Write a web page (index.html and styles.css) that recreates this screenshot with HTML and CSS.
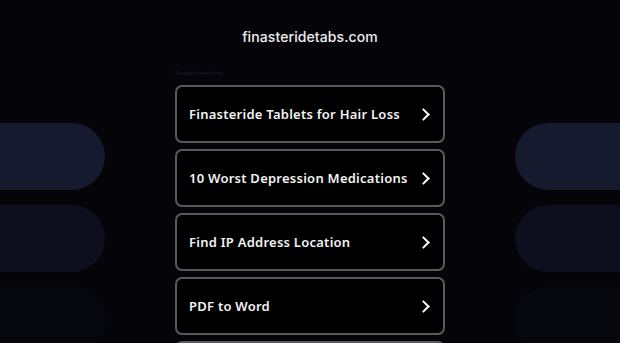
FILE: index.html
```html
<!DOCTYPE html>
<html>
	<head>
		<meta charset="utf-8" />
		<meta name="viewport" content="width=device-width, initial-scale=1.0" />
		<title>finasteridetabs.com</title>
		<link rel="stylesheet" href="styles.css">
	</head>
	<body class="main">
        <aside class="side side-left">
            <div class="pill pill-1"></div>
            <div class="pill pill-2"></div>
            <div class="pill pill-3"></div>
        </aside>
        <main class="content">
            <h1 class="domain">finasteridetabs.com</h1>
            <p class="related">Related searches</p>
            <ul class="links">
                <li><a class="link" href="#">Finasteride Tablets for Hair Loss<span class="chevron"></span></a></li>
                <li><a class="link" href="#">10 Worst Depression Medications<span class="chevron"></span></a></li>
                <li><a class="link" href="#">Find IP Address Location<span class="chevron"></span></a></li>
                <li><a class="link" href="#">PDF to Word<span class="chevron"></span></a></li>
                <li><a class="link" href="#" aria-hidden="true"></a></li>
            </ul>
        </main>
        <aside class="side side-right">
            <div class="pill pill-1"></div>
            <div class="pill pill-2"></div>
            <div class="pill pill-3"></div>
        </aside>
	</body>
</html>
```

FILE: styles.css
```css
:root {
    --font-family: "Noto Sans", "DejaVu Sans", Arial, sans-serif;
}

body {
    margin: 0;
    padding: 0;
    overflow: hidden;
    width: 100vw;
    height: 100vh;
    color: #fff;
    font-family: var(--font-family);
    background-color: #050509;
}

.main {
    display: grid;
    grid-template-columns: 105px 1fr 105px;
}

.side {
    display: flex;
    flex-direction: column;
    gap: 15px;
    padding-top: 123px;
}

.pill {
    height: 67px;
    flex-shrink: 0;
}

.side-left .pill {
    border-radius: 0 34px 34px 0;
}

.side-right .pill {
    border-radius: 34px 0 0 34px;
}

.pill-1 {
    background-color: #151a2e;
}

.pill-2 {
    background-color: #0d0f1f;
}

.pill-3 {
    background-color: #07070e;
}

.content {
    display: flex;
    flex-direction: column;
    align-items: center;
}

.domain {
    margin: 28px 0 0;
    font-family: "Inter", sans-serif;
    font-size: 14px;
    font-weight: 500;
    line-height: 18px;
    letter-spacing: 0.1px;
    color: #eeeef0;
}

.related {
    width: 270px;
    margin: 23px 0 8px;
    font-size: 6px;
    line-height: 8px;
    color: #1a1a2c;
}

.links {
    list-style: none;
    margin: 0;
    padding: 0;
    display: flex;
    flex-direction: column;
    gap: 6px;
}

.link {
    box-sizing: border-box;
    display: flex;
    align-items: center;
    justify-content: space-between;
    width: 270px;
    height: 58px;
    padding: 0 12px 0 12px;
    border: 2px solid #5a5a5e;
    border-radius: 7px;
    background-color: #000;
    color: #f2f2f2;
    text-decoration: none;
    font-size: 13px;
    font-weight: 600;
    letter-spacing: 0.25px;
}

.chevron {
    width: 7px;
    height: 7px;
    margin-right: 3px;
    border-top: 2px solid #fff;
    border-right: 2px solid #fff;
    transform: rotate(45deg);
}
```
